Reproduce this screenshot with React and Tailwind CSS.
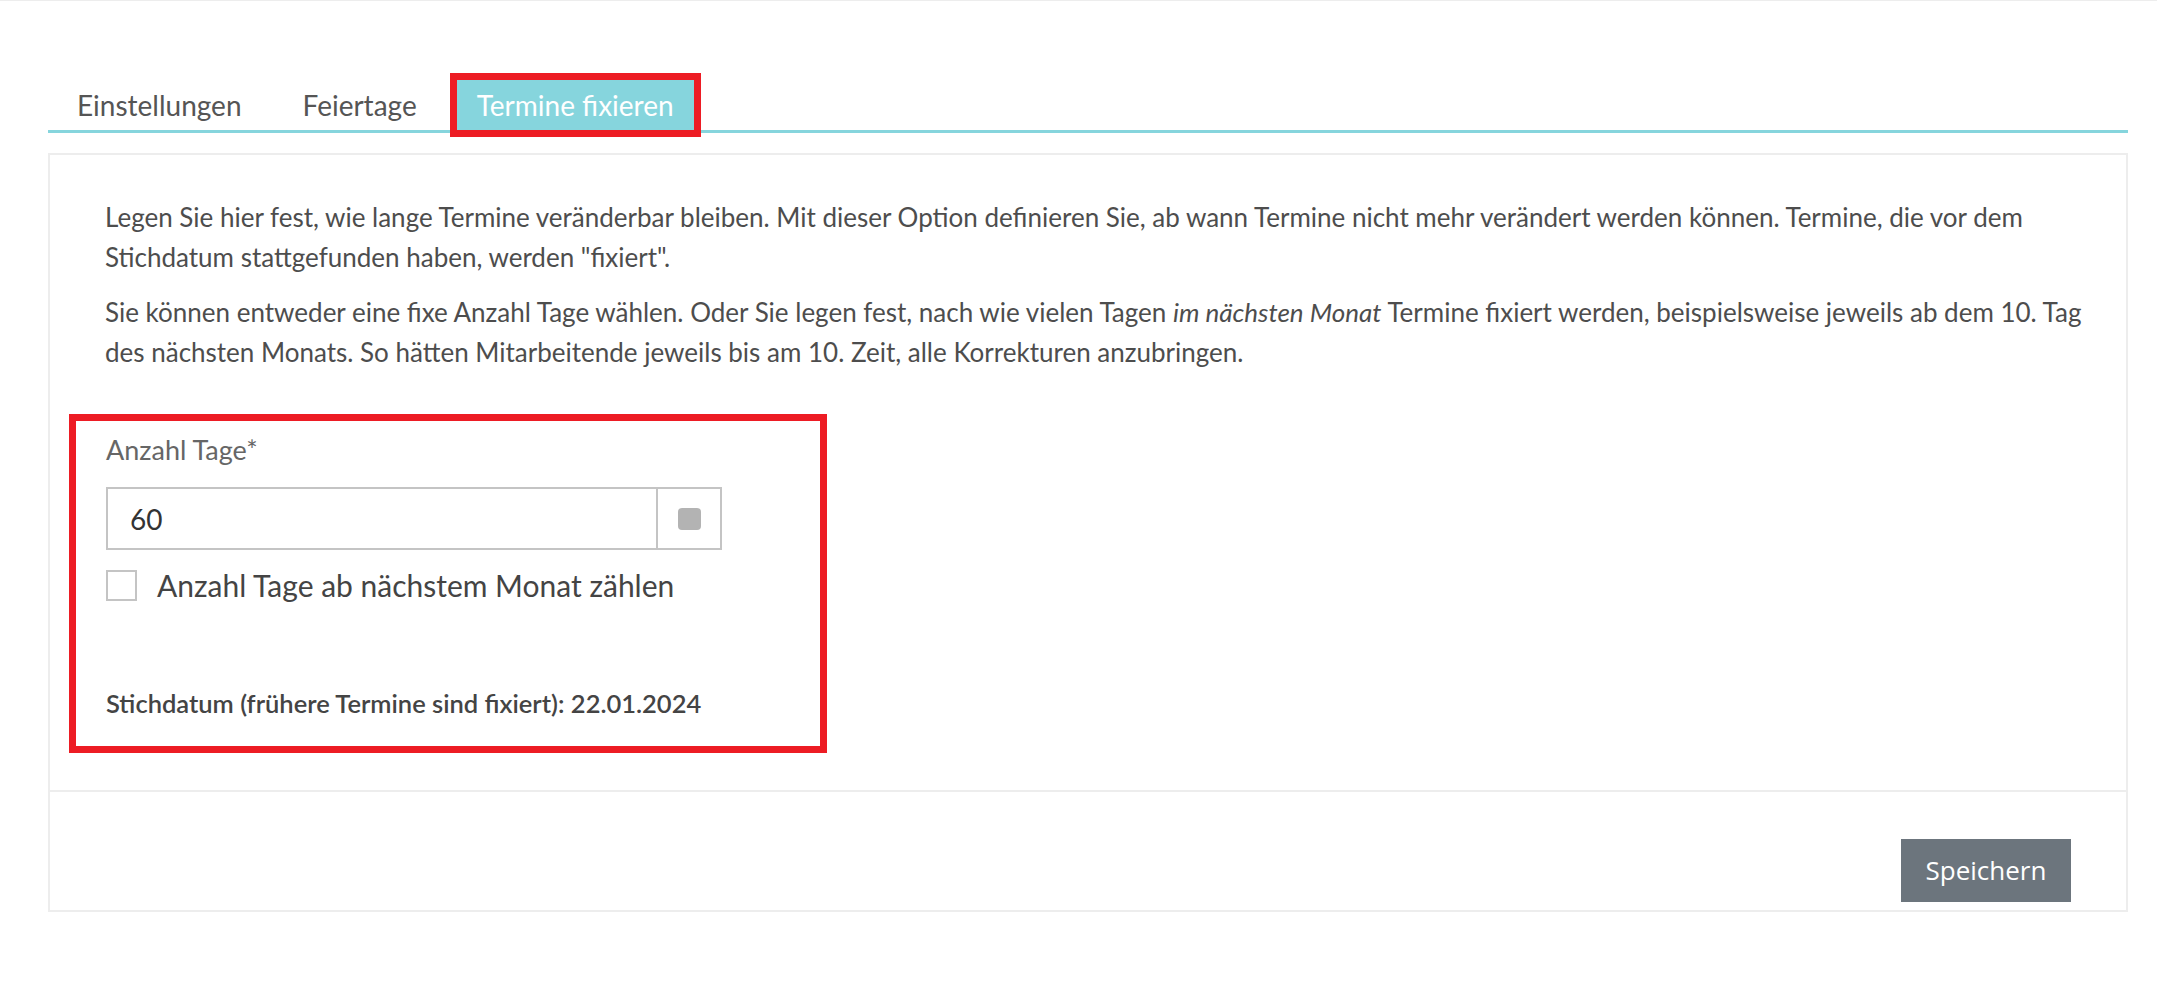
import React, { useState } from 'react';

const tabs = ['Einstellungen', 'Feiertage', 'Termine fixieren'];

const App = () => {
  const [activeTab, setActiveTab] = useState(2);
  const [days, setDays] = useState('60');
  const [fromNextMonth, setFromNextMonth] = useState(false);

  return (
    <div className="min-h-screen bg-white border-t border-[#ededed] pt-[79px] pl-[48px] pr-[29px] font-['Lato',sans-serif]">
      {/* Tabs */}
      <div className="flex items-end border-b-[3px] border-[#86d5dd] pl-[8px] gap-[19px]">
        {tabs.map((tab, index) => (
          <button
            key={tab}
            onClick={() => setActiveTab(index)}
            className={
              index === activeTab
                ? 'h-[50px] px-[20px] text-[28px] leading-[34px] text-white bg-[#86d5dd] outline-[7px] outline-[#ed1c24]'
                : 'h-[50px] px-[21px] text-[28px] leading-[34px] text-[#555]'
            }
          >
            {tab}
          </button>
        ))}
      </div>

      {/* Panel */}
      <div className="mt-[20px] border-2 border-[#ededed]">
        <div className="pt-[42px] pl-[55px] pr-[20px] pb-[37px] text-[#4d4d4d]">
          <p className="text-[26px] leading-[40px] mb-[15px]">
            Legen Sie hier fest, wie lange Termine veränderbar bleiben. Mit dieser Option definieren Sie, ab wann Termine nicht mehr verändert werden können. Termine, die vor dem Stichdatum stattgefunden haben, werden "fixiert".
          </p>
          <p className="text-[26px] leading-[40px]">
            Sie können entweder eine fixe Anzahl Tage wählen. Oder Sie legen fest, nach wie vielen Tagen <em>im nächsten Monat</em> Termine fixiert werden, beispielsweise jeweils ab dem 10. Tag des nächsten Monats. So hätten Mitarbeitende jeweils bis am 10. Zeit, alle Korrekturen anzubringen.
          </p>

          {/* Formular */}
          <div className="mt-[42px] ml-[-36px] w-[758px] border-[7px] border-[#ed1c24] pt-[15px] pl-[30px] pb-[28px]">
            <label className="block text-[27px] leading-[28px] text-[#666]">Anzahl Tage*</label>
            <div className="mt-[23px] flex h-[63px] w-[616px] border-2 border-[#c4c4c4]">
              <input
                type="text"
                value={days}
                onChange={(e) => setDays(e.target.value)}
                className="flex-1 min-w-0 pl-[22px] text-[28px] text-[#333] outline-none bg-white"
              />
              <div className="w-[64px] border-l-2 border-[#c4c4c4] flex items-center justify-center">
                <div className="w-[23px] h-[22px] rounded-[4px] bg-[#b3b3b3]" />
              </div>
            </div>
            <label className="mt-[19px] flex items-center gap-[20px] cursor-pointer">
              <span
                onClick={() => setFromNextMonth(!fromNextMonth)}
                className="w-[31px] h-[31px] border-2 border-[#c4c4c4] bg-white flex items-center justify-center text-[#555] text-[20px]"
              >
                {fromNextMonth ? '✓' : ''}
              </span>
              <span className="text-[30px] leading-[32px] text-[#444]">Anzahl Tage ab nächstem Monat zählen</span>
            </label>
            <div className="mt-[87px] text-[25.5px] leading-[30px] font-semibold text-[#444]">
              Stichdatum (frühere Termine sind fixiert): 22.01.2024
            </div>
          </div>
        </div>

        {/* Footer */}
        <div className="border-t-2 border-[#ededed] flex justify-end pt-[47px] pr-[55px] pb-[8px]">
          <button className="w-[170px] h-[63px] bg-[#6c757d] text-white text-[26px] font-['Open_Sans',sans-serif]">
            Speichern
          </button>
        </div>
      </div>
    </div>
  );
};

export default App;
